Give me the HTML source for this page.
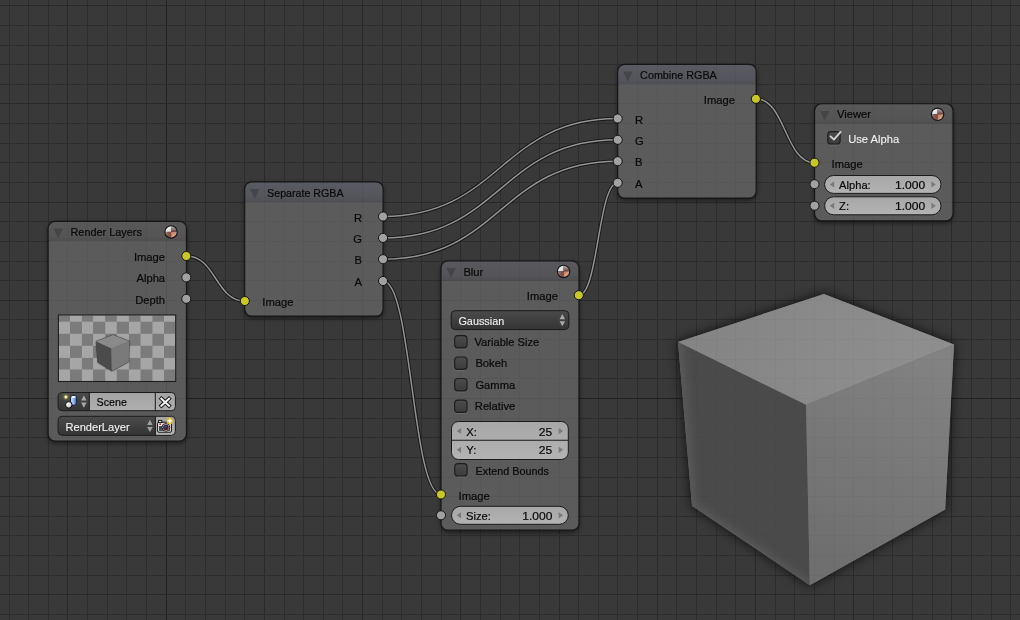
<!DOCTYPE html><html><head><meta charset="utf-8"><style>html,body{margin:0;padding:0;background:#393939;width:1020px;height:620px;overflow:hidden}svg{display:block;will-change:transform}text{font-family:"Liberation Sans", sans-serif}</style></head><body>
<svg width="1020" height="620" viewBox="0 0 1020 620">
<defs><filter id="shadow" x="-20%" y="-20%" width="140%" height="140%"><feGaussianBlur stdDeviation="2.2"/></filter><filter id="cshadow" x="-30%" y="-30%" width="160%" height="160%"><feGaussianBlur stdDeviation="6"/></filter><filter id="mshadow" x="-30%" y="-30%" width="160%" height="160%"><feGaussianBlur stdDeviation="1.2"/></filter><linearGradient id="numg" x1="0" y1="0" x2="0" y2="1"><stop offset="0" stop-color="#a7a7a7"/><stop offset="1" stop-color="#b3b3b3"/></linearGradient><linearGradient id="ddg" x1="0" y1="0" x2="0" y2="1"><stop offset="0" stop-color="#4b4b4b"/><stop offset="1" stop-color="#343434"/></linearGradient><linearGradient id="txtg" x1="0" y1="0" x2="0" y2="1"><stop offset="0" stop-color="#a3a3a3"/><stop offset="1" stop-color="#afafaf"/></linearGradient><linearGradient id="sphTL" x1="0" y1="0" x2="1" y2="1"><stop offset="0.2" stop-color="#ffffff"/><stop offset="1" stop-color="#d0d0d0"/></linearGradient><linearGradient id="sphTR" x1="0" y1="0" x2="0" y2="1"><stop offset="0.2" stop-color="#b4b4b4"/><stop offset="1" stop-color="#6a3a36"/></linearGradient><linearGradient id="sphBL" x1="0" y1="0" x2="1" y2="0"><stop offset="0" stop-color="#b8a8a4"/><stop offset="0.5" stop-color="#8c5a52"/><stop offset="1" stop-color="#7a4840"/></linearGradient><linearGradient id="sphBR" x1="0" y1="0" x2="1" y2="1"><stop offset="0" stop-color="#b87868"/><stop offset="1" stop-color="#f0c0b0"/></linearGradient><linearGradient id="cbg" x1="0" y1="0" x2="0" y2="1"><stop offset="0" stop-color="#4c4c4c"/><stop offset="1" stop-color="#3b3b3b"/></linearGradient></defs>
<rect width="1020" height="620" fill="#393939"/>
<rect x="9" y="0" width="1" height="620" fill="#2d2d2d"/>
<rect x="28" y="0" width="1" height="620" fill="#2d2d2d"/>
<rect x="48" y="0" width="1" height="620" fill="#2d2d2d"/>
<rect x="67" y="0" width="1" height="620" fill="#292929"/>
<rect x="87" y="0" width="1" height="620" fill="#2d2d2d"/>
<rect x="107" y="0" width="1" height="620" fill="#2d2d2d"/>
<rect x="126" y="0" width="1" height="620" fill="#2d2d2d"/>
<rect x="146" y="0" width="1" height="620" fill="#2d2d2d"/>
<rect x="166" y="0" width="1" height="620" fill="#212121"/>
<rect x="185" y="0" width="1" height="620" fill="#2d2d2d"/>
<rect x="205" y="0" width="1" height="620" fill="#2d2d2d"/>
<rect x="225" y="0" width="1" height="620" fill="#2d2d2d"/>
<rect x="244" y="0" width="1" height="620" fill="#2d2d2d"/>
<rect x="264" y="0" width="1" height="620" fill="#292929"/>
<rect x="284" y="0" width="1" height="620" fill="#2d2d2d"/>
<rect x="303" y="0" width="1" height="620" fill="#2d2d2d"/>
<rect x="323" y="0" width="1" height="620" fill="#2d2d2d"/>
<rect x="342" y="0" width="1" height="620" fill="#2d2d2d"/>
<rect x="362" y="0" width="1" height="620" fill="#292929"/>
<rect x="382" y="0" width="1" height="620" fill="#2d2d2d"/>
<rect x="401" y="0" width="1" height="620" fill="#2d2d2d"/>
<rect x="421" y="0" width="1" height="620" fill="#2d2d2d"/>
<rect x="441" y="0" width="1" height="620" fill="#2d2d2d"/>
<rect x="460" y="0" width="1" height="620" fill="#292929"/>
<rect x="480" y="0" width="1" height="620" fill="#2d2d2d"/>
<rect x="500" y="0" width="1" height="620" fill="#2d2d2d"/>
<rect x="519" y="0" width="1" height="620" fill="#2d2d2d"/>
<rect x="539" y="0" width="1" height="620" fill="#2d2d2d"/>
<rect x="559" y="0" width="1" height="620" fill="#292929"/>
<rect x="578" y="0" width="1" height="620" fill="#2d2d2d"/>
<rect x="598" y="0" width="1" height="620" fill="#2d2d2d"/>
<rect x="617" y="0" width="1" height="620" fill="#2d2d2d"/>
<rect x="637" y="0" width="1" height="620" fill="#2d2d2d"/>
<rect x="657" y="0" width="1" height="620" fill="#292929"/>
<rect x="676" y="0" width="1" height="620" fill="#2d2d2d"/>
<rect x="696" y="0" width="1" height="620" fill="#2d2d2d"/>
<rect x="716" y="0" width="1" height="620" fill="#2d2d2d"/>
<rect x="735" y="0" width="1" height="620" fill="#2d2d2d"/>
<rect x="755" y="0" width="1" height="620" fill="#292929"/>
<rect x="775" y="0" width="1" height="620" fill="#2d2d2d"/>
<rect x="794" y="0" width="1" height="620" fill="#2d2d2d"/>
<rect x="814" y="0" width="1" height="620" fill="#2d2d2d"/>
<rect x="834" y="0" width="1" height="620" fill="#2d2d2d"/>
<rect x="853" y="0" width="1" height="620" fill="#292929"/>
<rect x="873" y="0" width="1" height="620" fill="#2d2d2d"/>
<rect x="892" y="0" width="1" height="620" fill="#2d2d2d"/>
<rect x="912" y="0" width="1" height="620" fill="#2d2d2d"/>
<rect x="932" y="0" width="1" height="620" fill="#2d2d2d"/>
<rect x="951" y="0" width="1" height="620" fill="#292929"/>
<rect x="971" y="0" width="1" height="620" fill="#2d2d2d"/>
<rect x="991" y="0" width="1" height="620" fill="#2d2d2d"/>
<rect x="1010" y="0" width="1" height="620" fill="#2d2d2d"/>
<rect x="0" y="5" width="1020" height="1" fill="#292929"/>
<rect x="0" y="25" width="1020" height="1" fill="#2d2d2d"/>
<rect x="0" y="45" width="1020" height="1" fill="#2d2d2d"/>
<rect x="0" y="64" width="1020" height="1" fill="#2d2d2d"/>
<rect x="0" y="84" width="1020" height="1" fill="#2d2d2d"/>
<rect x="0" y="103" width="1020" height="1" fill="#292929"/>
<rect x="0" y="123" width="1020" height="1" fill="#2d2d2d"/>
<rect x="0" y="143" width="1020" height="1" fill="#2d2d2d"/>
<rect x="0" y="162" width="1020" height="1" fill="#2d2d2d"/>
<rect x="0" y="182" width="1020" height="1" fill="#2d2d2d"/>
<rect x="0" y="202" width="1020" height="1" fill="#292929"/>
<rect x="0" y="221" width="1020" height="1" fill="#2d2d2d"/>
<rect x="0" y="241" width="1020" height="1" fill="#2d2d2d"/>
<rect x="0" y="261" width="1020" height="1" fill="#2d2d2d"/>
<rect x="0" y="280" width="1020" height="1" fill="#2d2d2d"/>
<rect x="0" y="300" width="1020" height="1" fill="#292929"/>
<rect x="0" y="319" width="1020" height="1" fill="#2d2d2d"/>
<rect x="0" y="339" width="1020" height="1" fill="#2d2d2d"/>
<rect x="0" y="359" width="1020" height="1" fill="#2d2d2d"/>
<rect x="0" y="378" width="1020" height="1" fill="#2d2d2d"/>
<rect x="0" y="398" width="1020" height="1" fill="#212121"/>
<rect x="0" y="418" width="1020" height="1" fill="#2d2d2d"/>
<rect x="0" y="437" width="1020" height="1" fill="#2d2d2d"/>
<rect x="0" y="457" width="1020" height="1" fill="#2d2d2d"/>
<rect x="0" y="477" width="1020" height="1" fill="#2d2d2d"/>
<rect x="0" y="496" width="1020" height="1" fill="#292929"/>
<rect x="0" y="516" width="1020" height="1" fill="#2d2d2d"/>
<rect x="0" y="535" width="1020" height="1" fill="#2d2d2d"/>
<rect x="0" y="555" width="1020" height="1" fill="#2d2d2d"/>
<rect x="0" y="575" width="1020" height="1" fill="#2d2d2d"/>
<rect x="0" y="594" width="1020" height="1" fill="#292929"/>
<rect x="0" y="614" width="1020" height="1" fill="#2d2d2d"/>
<path d="M186.5,256.0 C215.7,256.0 215.7,301.0 244.8,301.0" fill="none" stroke="#181818" stroke-width="3.4"/><path d="M186.5,256.0 C215.7,256.0 215.7,301.0 244.8,301.0" fill="none" stroke="#939393" stroke-width="1.5"/>
<path d="M383.0,216.5 C500.4,216.5 500.4,118.5 617.7,118.5" fill="none" stroke="#181818" stroke-width="3.4"/><path d="M383.0,216.5 C500.4,216.5 500.4,118.5 617.7,118.5" fill="none" stroke="#939393" stroke-width="1.5"/>
<path d="M383.0,237.9 C500.4,237.9 500.4,139.8 617.7,139.8" fill="none" stroke="#181818" stroke-width="3.4"/><path d="M383.0,237.9 C500.4,237.9 500.4,139.8 617.7,139.8" fill="none" stroke="#939393" stroke-width="1.5"/>
<path d="M383.0,259.2 C500.4,259.2 500.4,161.2 617.7,161.2" fill="none" stroke="#181818" stroke-width="3.4"/><path d="M383.0,259.2 C500.4,259.2 500.4,161.2 617.7,161.2" fill="none" stroke="#939393" stroke-width="1.5"/>
<path d="M383.0,281.0 C412.0,281.0 412.0,494.5 441.0,494.5" fill="none" stroke="#181818" stroke-width="3.4"/><path d="M383.0,281.0 C412.0,281.0 412.0,494.5 441.0,494.5" fill="none" stroke="#939393" stroke-width="1.5"/>
<path d="M578.8,295.2 C598.2,295.2 598.2,182.8 617.7,182.8" fill="none" stroke="#181818" stroke-width="3.4"/><path d="M578.8,295.2 C598.2,295.2 598.2,182.8 617.7,182.8" fill="none" stroke="#939393" stroke-width="1.5"/>
<path d="M755.9,98.8 C785.2,98.8 785.2,162.7 814.5,162.7" fill="none" stroke="#181818" stroke-width="3.4"/><path d="M755.9,98.8 C785.2,98.8 785.2,162.7 814.5,162.7" fill="none" stroke="#939393" stroke-width="1.5"/>
<mask id="mrl" maskUnits="userSpaceOnUse" x="0" y="0" width="1020" height="620"><rect width="1020" height="620" fill="#fff"/><rect x="48.1" y="221.3" width="138.4" height="219.7" rx="7.0" fill="#000"/></mask>
<g mask="url(#mrl)"><rect x="47.6" y="222.8" width="139.4" height="220.7" rx="8.0" fill="#000" opacity="0.5" filter="url(#shadow)"/></g>
<g opacity="1">
<path d="M48.1,240.9 H186.5 V434.0 A7.0,7.0 0 0 1 179.5,441.0 H55.1 A7.0,7.0 0 0 1 48.1,434.0 Z" fill="#6a6a6a" fill-opacity="0.7"/>
<linearGradient id="hgrl" x1="0" y1="0" x2="0" y2="1"><stop offset="0" stop-color="#656565"/><stop offset="0.75" stop-color="#616161"/><stop offset="1" stop-color="#585858"/></linearGradient>
<path d="M48.1,240.9 V228.3 A7.0,7.0 0 0 1 55.1,221.3 H179.5 A7.0,7.0 0 0 1 186.5,228.3 V240.9 Z" fill="url(#hgrl)" fill-opacity="0.7"/>
</g>
<rect x="48.1" y="221.3" width="138.4" height="219.7" rx="7.0" fill="none" stroke="#161616" stroke-width="1.15"/>
<path d="M53.50,228.50 H62.90 L58.20,238.30 Z" fill="#454545"/>
<text x="70.50" y="236.00" font-size="11.4" fill="#0a0a0a" stroke="#0a0a0a" stroke-width="0.22" text-anchor="start" textLength="71.40" lengthAdjust="spacingAndGlyphs">Render Layers</text>
<circle cx="171.10" cy="231.90" r="6.75" fill="#161616"/><g clip-path="url(#sph171)"><clipPath id="sph171"><circle cx="171.10" cy="231.90" r="5.6"/></clipPath><rect x="164.35" y="225.15" width="6.75" height="6.75" fill="url(#sphTL)"/><rect x="171.1" y="225.15" width="6.75" height="6.75" fill="url(#sphTR)"/><rect x="164.35" y="231.9" width="6.75" height="6.75" fill="url(#sphBL)"/><rect x="171.1" y="231.9" width="6.75" height="6.75" fill="url(#sphBR)"/><circle cx="173.90" cy="234.50" r="1.1" fill="#e8a040" opacity="0.85"/></g>
<text x="165.10" y="260.90" font-size="11.4" fill="#0a0a0a" stroke="#0a0a0a" stroke-width="0.22" text-anchor="end" textLength="31.20" lengthAdjust="spacingAndGlyphs">Image</text>
<text x="165.10" y="282.30" font-size="11.4" fill="#0a0a0a" stroke="#0a0a0a" stroke-width="0.22" text-anchor="end" textLength="28.64" lengthAdjust="spacingAndGlyphs">Alpha</text>
<text x="165.10" y="303.70" font-size="11.4" fill="#0a0a0a" stroke="#0a0a0a" stroke-width="0.22" text-anchor="end" textLength="29.88" lengthAdjust="spacingAndGlyphs">Depth</text>
<circle cx="186.30" cy="256.00" r="4.55" fill="#c7c729" stroke="#141414" stroke-width="1"/>
<circle cx="186.30" cy="277.40" r="4.55" fill="#a1a1a1" stroke="#141414" stroke-width="1"/>
<circle cx="186.30" cy="298.80" r="4.55" fill="#a1a1a1" stroke="#141414" stroke-width="1"/>
<rect x="58.4" y="315.0" width="117.3" height="66.5" fill="#a6a6a6"/>
<rect x="58.90" y="315.50" width="11.10" height="6.20" fill="#7b7b7b"/>
<rect x="81.90" y="315.50" width="11.20" height="6.20" fill="#7b7b7b"/>
<rect x="105.20" y="315.50" width="11.60" height="6.20" fill="#7b7b7b"/>
<rect x="128.90" y="315.50" width="11.60" height="6.20" fill="#7b7b7b"/>
<rect x="152.40" y="315.50" width="11.60" height="6.20" fill="#7b7b7b"/>
<rect x="70.00" y="321.70" width="11.90" height="12.10" fill="#7b7b7b"/>
<rect x="93.10" y="321.70" width="12.10" height="12.10" fill="#7b7b7b"/>
<rect x="116.80" y="321.70" width="12.10" height="12.10" fill="#7b7b7b"/>
<rect x="140.50" y="321.70" width="11.90" height="12.10" fill="#7b7b7b"/>
<rect x="164.00" y="321.70" width="11.20" height="12.10" fill="#7b7b7b"/>
<rect x="58.90" y="333.80" width="11.10" height="12.00" fill="#7b7b7b"/>
<rect x="81.90" y="333.80" width="11.20" height="12.00" fill="#7b7b7b"/>
<rect x="105.20" y="333.80" width="11.60" height="12.00" fill="#7b7b7b"/>
<rect x="128.90" y="333.80" width="11.60" height="12.00" fill="#7b7b7b"/>
<rect x="152.40" y="333.80" width="11.60" height="12.00" fill="#7b7b7b"/>
<rect x="70.00" y="345.80" width="11.90" height="12.10" fill="#7b7b7b"/>
<rect x="93.10" y="345.80" width="12.10" height="12.10" fill="#7b7b7b"/>
<rect x="116.80" y="345.80" width="12.10" height="12.10" fill="#7b7b7b"/>
<rect x="140.50" y="345.80" width="11.90" height="12.10" fill="#7b7b7b"/>
<rect x="164.00" y="345.80" width="11.20" height="12.10" fill="#7b7b7b"/>
<rect x="58.90" y="357.90" width="11.10" height="11.60" fill="#7b7b7b"/>
<rect x="81.90" y="357.90" width="11.20" height="11.60" fill="#7b7b7b"/>
<rect x="105.20" y="357.90" width="11.60" height="11.60" fill="#7b7b7b"/>
<rect x="128.90" y="357.90" width="11.60" height="11.60" fill="#7b7b7b"/>
<rect x="152.40" y="357.90" width="11.60" height="11.60" fill="#7b7b7b"/>
<rect x="70.00" y="369.50" width="11.90" height="11.70" fill="#7b7b7b"/>
<rect x="93.10" y="369.50" width="12.10" height="11.70" fill="#7b7b7b"/>
<rect x="116.80" y="369.50" width="12.10" height="11.70" fill="#7b7b7b"/>
<rect x="140.50" y="369.50" width="11.90" height="11.70" fill="#7b7b7b"/>
<rect x="164.00" y="369.50" width="11.20" height="11.70" fill="#7b7b7b"/>
<rect x="58.4" y="315.0" width="117.3" height="66.5" fill="none" stroke="#1e1e1e" stroke-width="1.1"/>
<polygon points="113.10,335.10 129.30,341.20 128.70,361.80 111.90,371.00 97.90,362.40 96.10,341.50" fill="#000" opacity="0.35" filter="url(#mshadow)"/>
<polygon points="113.10,335.10 129.30,341.20 128.70,361.80 111.90,371.00 97.90,362.40 96.10,341.50" fill="#6a6a6a" stroke="#3a3a3a" stroke-width="0.8" stroke-linejoin="round"/>
<polygon points="113.10,335.10 129.30,341.20 111.30,348.50 96.10,341.50" fill="#8a8a8a"/>
<polygon points="96.10,341.50 111.30,348.50 111.90,371.00 97.90,362.40" fill="#4b4b4b"/>
<polygon points="111.30,348.50 129.30,341.20 128.70,361.80 111.90,371.00" fill="#7a7a7a"/>
<rect x="58.1" y="392.5" width="117.3" height="18.2" rx="4" fill="url(#txtg)"/>
<path d="M89.3,392.5 H62.1 A4,4 0 0 0 58.1,396.5 V406.7 A4,4 0 0 0 62.1,410.7 H89.3 Z" fill="url(#ddg)"/>
<line x1="89.3" y1="392.5" x2="89.3" y2="410.7" stroke="#1a1a1a" stroke-width="1"/>
<line x1="155.3" y1="392.5" x2="155.3" y2="410.7" stroke="#1a1a1a" stroke-width="1"/>
<rect x="58.1" y="392.5" width="117.3" height="18.2" rx="4" fill="none" stroke="#1a1a1a" stroke-width="1"/>
<text x="96.60" y="405.60" font-size="11.4" fill="#0a0a0a" stroke="#0a0a0a" stroke-width="0.22" text-anchor="start" textLength="30.30" lengthAdjust="spacingAndGlyphs">Scene</text>
<circle cx="65.9" cy="397.0" r="2.4" fill="#c8c040" opacity="0.6" filter="url(#mshadow)"/>
<circle cx="65.9" cy="397.0" r="1.7" fill="#d8d060"/><circle cx="65.9" cy="397.0" r="0.9" fill="#ffffff"/>
<linearGradient id="cylg" x1="0" y1="0" x2="1" y2="0"><stop offset="0" stop-color="#e8f0ff"/><stop offset="0.45" stop-color="#9ab8f0"/><stop offset="1" stop-color="#3f6cc0"/></linearGradient>
<rect x="70.6" y="395.4" width="6.0" height="9.9" rx="2.6" fill="url(#cylg)" stroke="#102050" stroke-width="1"/>
<ellipse cx="73.6" cy="397.0" rx="2.2" ry="1.1" fill="#f4f8ff"/>
<radialGradient id="sphw" cx="0.35" cy="0.35" r="0.7"><stop offset="0" stop-color="#ffffff"/><stop offset="0.6" stop-color="#d8d8d8"/><stop offset="1" stop-color="#8a8a8a"/></radialGradient>
<circle cx="68.8" cy="404.9" r="3.3" fill="url(#sphw)" stroke="#0a0a0a" stroke-width="1"/>
<path d="M81.10,400.50 L83.85,395.40 L86.60,400.50 Z" fill="#a6a6a6"/><path d="M81.10,402.60 L83.85,407.65 L86.60,402.60 Z" fill="#a6a6a6"/>
<path d="M160.0,397.4 L170.4,407.0 M170.4,397.4 L160.0,407.0" stroke="#141414" stroke-width="4.0"/>
<path d="M160.6,398.0 L169.8,406.4 M169.8,398.0 L160.6,406.4" stroke="#f4f4f4" stroke-width="2.0"/>
<rect x="58.1" y="416.3" width="117.3" height="19.1" rx="4" fill="url(#txtg)"/>
<path d="M155.4,416.3 H62.1 A4,4 0 0 0 58.1,420.3 V431.40000000000003 A4,4 0 0 0 62.1,435.40000000000003 H155.4 Z" fill="url(#ddg)"/>
<line x1="155.4" y1="416.3" x2="155.4" y2="435.40000000000003" stroke="#1a1a1a" stroke-width="1"/>
<rect x="58.1" y="416.3" width="117.3" height="19.1" rx="4" fill="none" stroke="#1a1a1a" stroke-width="1"/>
<text x="65.50" y="430.80" font-size="11.4" fill="#f2f2f2" stroke="#f2f2f2" stroke-width="0.12" text-anchor="start" textLength="64.10" lengthAdjust="spacingAndGlyphs">RenderLayer</text>
<path d="M147.15,424.95 L149.90,419.85 L152.65,424.95 Z" fill="#a0a0a0"/><path d="M147.15,427.05 L149.90,432.10 L152.65,427.05 Z" fill="#a0a0a0"/>
<rect x="157.6" y="422.2" width="13.8" height="10.0" rx="1.2" fill="#e6e6e6" stroke="#0e0e0e" stroke-width="1"/>
<rect x="159.0" y="426.0" width="11.0" height="4.9" fill="#4a4a4a"/>
<rect x="158.6" y="420.4" width="3.2" height="2.2" fill="#e6e6e6" stroke="#0e0e0e" stroke-width="0.9"/>
<circle cx="160.2" cy="424.2" r="0.9" fill="#e02020"/>
<circle cx="165.9" cy="427.4" r="3.9" fill="#e6e6e6" stroke="#0e0e0e" stroke-width="0.9"/>
<radialGradient id="lensg" cx="0.4" cy="0.4" r="0.7"><stop offset="0" stop-color="#3a4a8a"/><stop offset="0.6" stop-color="#402030"/><stop offset="1" stop-color="#a03020"/></radialGradient>
<circle cx="165.9" cy="427.4" r="2.9" fill="url(#lensg)"/>
<circle cx="169.8" cy="420.9" r="3.3" fill="#d4b430"/>
<path d="M169.8,418.5 V423.3 M167.4,420.9 H172.2" stroke="#ffffff" stroke-width="1.3"/>
<mask id="msep" maskUnits="userSpaceOnUse" x="0" y="0" width="1020" height="620"><rect width="1020" height="620" fill="#fff"/><rect x="244.7" y="181.9" width="138.4" height="134.2" rx="7.0" fill="#000"/></mask>
<g mask="url(#msep)"><rect x="244.2" y="183.4" width="139.4" height="135.2" rx="8.0" fill="#000" opacity="0.5" filter="url(#shadow)"/></g>
<g opacity="1">
<path d="M244.7,201.5 H383.1 V309.1 A7.0,7.0 0 0 1 376.1,316.1 H251.7 A7.0,7.0 0 0 1 244.7,309.1 Z" fill="#6a6a6a" fill-opacity="0.7"/>
<linearGradient id="hgsep" x1="0" y1="0" x2="0" y2="1"><stop offset="0" stop-color="#676a74"/><stop offset="0.75" stop-color="#60626b"/><stop offset="1" stop-color="#575a62"/></linearGradient>
<path d="M244.7,201.5 V188.9 A7.0,7.0 0 0 1 251.7,181.9 H376.1 A7.0,7.0 0 0 1 383.1,188.9 V201.5 Z" fill="url(#hgsep)" fill-opacity="0.7"/>
</g>
<rect x="244.7" y="181.9" width="138.4" height="134.2" rx="7.0" fill="none" stroke="#161616" stroke-width="1.15"/>
<path d="M250.10,189.10 H259.50 L254.80,198.90 Z" fill="#44464c"/>
<text x="267.10" y="196.60" font-size="11.4" fill="#0a0a0a" stroke="#0a0a0a" stroke-width="0.22" text-anchor="start" textLength="76.50" lengthAdjust="spacingAndGlyphs">Separate RGBA</text>
<text x="362.00" y="221.50" font-size="11.4" fill="#0a0a0a" stroke="#0a0a0a" stroke-width="0.22" text-anchor="end" textLength="8.09" lengthAdjust="spacingAndGlyphs">R</text>
<circle cx="383.00" cy="216.50" r="4.55" fill="#a1a1a1" stroke="#141414" stroke-width="1"/>
<text x="362.00" y="242.90" font-size="11.4" fill="#0a0a0a" stroke="#0a0a0a" stroke-width="0.22" text-anchor="end" textLength="8.71" lengthAdjust="spacingAndGlyphs">G</text>
<circle cx="383.00" cy="237.90" r="4.55" fill="#a1a1a1" stroke="#141414" stroke-width="1"/>
<text x="362.00" y="264.20" font-size="11.4" fill="#0a0a0a" stroke="#0a0a0a" stroke-width="0.22" text-anchor="end" textLength="7.47" lengthAdjust="spacingAndGlyphs">B</text>
<circle cx="383.00" cy="259.20" r="4.55" fill="#a1a1a1" stroke="#141414" stroke-width="1"/>
<text x="362.00" y="286.00" font-size="11.4" fill="#0a0a0a" stroke="#0a0a0a" stroke-width="0.22" text-anchor="end" textLength="7.47" lengthAdjust="spacingAndGlyphs">A</text>
<circle cx="383.00" cy="281.00" r="4.55" fill="#a1a1a1" stroke="#141414" stroke-width="1"/>
<text x="262.30" y="306.10" font-size="11.4" fill="#0a0a0a" stroke="#0a0a0a" stroke-width="0.22" text-anchor="start" textLength="31.13" lengthAdjust="spacingAndGlyphs">Image</text>
<circle cx="244.80" cy="301.00" r="4.55" fill="#c7c729" stroke="#141414" stroke-width="1"/>
<mask id="mcomb" maskUnits="userSpaceOnUse" x="0" y="0" width="1020" height="620"><rect width="1020" height="620" fill="#fff"/><rect x="617.7" y="64.4" width="138.5" height="133.7" rx="7.0" fill="#000"/></mask>
<g mask="url(#mcomb)"><rect x="617.2" y="65.9" width="139.5" height="134.7" rx="8.0" fill="#000" opacity="0.5" filter="url(#shadow)"/></g>
<g opacity="1">
<path d="M617.7,84.0 H756.2 V191.1 A7.0,7.0 0 0 1 749.2,198.1 H624.7 A7.0,7.0 0 0 1 617.7,191.1 Z" fill="#6a6a6a" fill-opacity="0.7"/>
<linearGradient id="hgcomb" x1="0" y1="0" x2="0" y2="1"><stop offset="0" stop-color="#676a74"/><stop offset="0.75" stop-color="#60626b"/><stop offset="1" stop-color="#575a62"/></linearGradient>
<path d="M617.7,84.0 V71.4 A7.0,7.0 0 0 1 624.7,64.4 H749.2 A7.0,7.0 0 0 1 756.2,71.4 V84.0 Z" fill="url(#hgcomb)" fill-opacity="0.7"/>
</g>
<rect x="617.7" y="64.4" width="138.5" height="133.7" rx="7.0" fill="none" stroke="#161616" stroke-width="1.15"/>
<path d="M623.10,71.60 H632.50 L627.80,81.40 Z" fill="#44464c"/>
<text x="640.10" y="79.10" font-size="11.4" fill="#0a0a0a" stroke="#0a0a0a" stroke-width="0.22" text-anchor="start" textLength="76.70" lengthAdjust="spacingAndGlyphs">Combine RGBA</text>
<text x="735.00" y="103.90" font-size="11.4" fill="#0a0a0a" stroke="#0a0a0a" stroke-width="0.22" text-anchor="end" textLength="31.13" lengthAdjust="spacingAndGlyphs">Image</text>
<circle cx="755.90" cy="98.80" r="4.55" fill="#c7c729" stroke="#141414" stroke-width="1"/>
<text x="635.00" y="123.50" font-size="11.4" fill="#0a0a0a" stroke="#0a0a0a" stroke-width="0.22" text-anchor="start" textLength="8.09" lengthAdjust="spacingAndGlyphs">R</text>
<circle cx="617.70" cy="118.50" r="4.55" fill="#a1a1a1" stroke="#141414" stroke-width="1"/>
<text x="635.00" y="144.80" font-size="11.4" fill="#0a0a0a" stroke="#0a0a0a" stroke-width="0.22" text-anchor="start" textLength="8.71" lengthAdjust="spacingAndGlyphs">G</text>
<circle cx="617.70" cy="139.80" r="4.55" fill="#a1a1a1" stroke="#141414" stroke-width="1"/>
<text x="635.00" y="166.20" font-size="11.4" fill="#0a0a0a" stroke="#0a0a0a" stroke-width="0.22" text-anchor="start" textLength="7.47" lengthAdjust="spacingAndGlyphs">B</text>
<circle cx="617.70" cy="161.20" r="4.55" fill="#a1a1a1" stroke="#141414" stroke-width="1"/>
<text x="635.00" y="187.80" font-size="11.4" fill="#0a0a0a" stroke="#0a0a0a" stroke-width="0.22" text-anchor="start" textLength="7.47" lengthAdjust="spacingAndGlyphs">A</text>
<circle cx="617.70" cy="182.80" r="4.55" fill="#a1a1a1" stroke="#141414" stroke-width="1"/>
<mask id="mview" maskUnits="userSpaceOnUse" x="0" y="0" width="1020" height="620"><rect width="1020" height="620" fill="#fff"/><rect x="814.6" y="103.7" width="138.4" height="117.1" rx="7.0" fill="#000"/></mask>
<g mask="url(#mview)"><rect x="814.1" y="105.2" width="139.4" height="118.1" rx="8.0" fill="#000" opacity="0.5" filter="url(#shadow)"/></g>
<g opacity="1">
<path d="M814.6,123.30000000000001 H953.0 V213.8 A7.0,7.0 0 0 1 946.0,220.8 H821.6 A7.0,7.0 0 0 1 814.6,213.8 Z" fill="#6a6a6a" fill-opacity="0.7"/>
<linearGradient id="hgview" x1="0" y1="0" x2="0" y2="1"><stop offset="0" stop-color="#656565"/><stop offset="0.75" stop-color="#616161"/><stop offset="1" stop-color="#585858"/></linearGradient>
<path d="M814.6,123.30000000000001 V110.7 A7.0,7.0 0 0 1 821.6,103.7 H946.0 A7.0,7.0 0 0 1 953.0,110.7 V123.30000000000001 Z" fill="url(#hgview)" fill-opacity="0.7"/>
</g>
<rect x="814.6" y="103.7" width="138.4" height="117.1" rx="7.0" fill="none" stroke="#161616" stroke-width="1.15"/>
<path d="M820.00,110.90 H829.40 L824.70,120.70 Z" fill="#454545"/>
<text x="837.00" y="118.40" font-size="11.4" fill="#0a0a0a" stroke="#0a0a0a" stroke-width="0.22" text-anchor="start" textLength="34.03" lengthAdjust="spacingAndGlyphs">Viewer</text>
<circle cx="937.60" cy="114.30" r="6.75" fill="#161616"/><g clip-path="url(#sph937)"><clipPath id="sph937"><circle cx="937.60" cy="114.30" r="5.6"/></clipPath><rect x="930.85" y="107.55" width="6.75" height="6.75" fill="url(#sphTL)"/><rect x="937.6" y="107.55" width="6.75" height="6.75" fill="url(#sphTR)"/><rect x="930.85" y="114.3" width="6.75" height="6.75" fill="url(#sphBL)"/><rect x="937.6" y="114.3" width="6.75" height="6.75" fill="url(#sphBR)"/><circle cx="940.40" cy="116.90" r="1.1" fill="#e8a040" opacity="0.85"/></g>
<path d="M829.70,145.10 H838.20" stroke="#7a7a7a" stroke-width="1" opacity="0.6"/><rect x="827.78" y="131.67" width="12.35" height="12.35" rx="3.3" fill="url(#cbg)" stroke="#1c1c1c" stroke-width="1.15"/><path d="M830.50,136.40 L834.00,139.50 L840.60,131.90" fill="none" stroke="#d2d2d2" stroke-width="1.9" stroke-linecap="round" stroke-linejoin="round"/>
<text x="848.20" y="143.00" font-size="11.4" fill="#f0f0f0" stroke="#f0f0f0" stroke-width="0.12" text-anchor="start" textLength="51.05" lengthAdjust="spacingAndGlyphs">Use Alpha</text>
<text x="831.60" y="167.70" font-size="11.4" fill="#0a0a0a" stroke="#0a0a0a" stroke-width="0.22" text-anchor="start" textLength="31.13" lengthAdjust="spacingAndGlyphs">Image</text>
<circle cx="814.50" cy="162.70" r="4.55" fill="#c7c729" stroke="#141414" stroke-width="1"/>
<rect x="824.60" y="175.50" width="116.40" height="17.90" rx="8.95" fill="url(#numg)" stroke="#1a1a1a" stroke-width="1"/><path d="M834.20,181.35 L829.80,184.45 L834.20,187.55 Z" fill="#7a7a7a"/><path d="M931.40,181.35 L935.80,184.45 L931.40,187.55 Z" fill="#7a7a7a"/><text x="839.10" y="189.05" font-size="11.4" fill="#0a0a0a" stroke="#0a0a0a" stroke-width="0.22" text-anchor="start" textLength="31.60" lengthAdjust="spacingAndGlyphs">Alpha:</text><text x="925.20" y="189.05" font-size="11.4" fill="#0a0a0a" stroke="#0a0a0a" stroke-width="0.22" text-anchor="end" textLength="30.20" lengthAdjust="spacingAndGlyphs">1.000</text>
<rect x="824.60" y="196.80" width="116.40" height="18.00" rx="9.00" fill="url(#numg)" stroke="#1a1a1a" stroke-width="1"/><path d="M834.20,202.70 L829.80,205.80 L834.20,208.90 Z" fill="#7a7a7a"/><path d="M931.40,202.70 L935.80,205.80 L931.40,208.90 Z" fill="#7a7a7a"/><text x="839.10" y="210.40" font-size="11.4" fill="#0a0a0a" stroke="#0a0a0a" stroke-width="0.22" text-anchor="start" textLength="9.95" lengthAdjust="spacingAndGlyphs">Z:</text><text x="925.20" y="210.40" font-size="11.4" fill="#0a0a0a" stroke="#0a0a0a" stroke-width="0.22" text-anchor="end" textLength="30.20" lengthAdjust="spacingAndGlyphs">1.000</text>
<circle cx="814.50" cy="184.20" r="4.55" fill="#a1a1a1" stroke="#141414" stroke-width="1"/>
<circle cx="814.50" cy="205.70" r="4.55" fill="#a1a1a1" stroke="#141414" stroke-width="1"/>
<mask id="mblur" maskUnits="userSpaceOnUse" x="0" y="0" width="1020" height="620"><rect width="1020" height="620" fill="#fff"/><rect x="441.0" y="260.8" width="138.0" height="269.4" rx="7.0" fill="#000"/></mask>
<g mask="url(#mblur)"><rect x="440.5" y="262.3" width="139.0" height="270.4" rx="8.0" fill="#000" opacity="0.5" filter="url(#shadow)"/></g>
<g opacity="1">
<path d="M441.0,280.40000000000003 H579.0 V523.2 A7.0,7.0 0 0 1 572.0,530.2 H448.0 A7.0,7.0 0 0 1 441.0,523.2 Z" fill="#6a6a6a" fill-opacity="0.7"/>
<linearGradient id="hgblur" x1="0" y1="0" x2="0" y2="1"><stop offset="0" stop-color="#67656b"/><stop offset="0.75" stop-color="#616065"/><stop offset="1" stop-color="#58575d"/></linearGradient>
<path d="M441.0,280.40000000000003 V267.8 A7.0,7.0 0 0 1 448.0,260.8 H572.0 A7.0,7.0 0 0 1 579.0,267.8 V280.40000000000003 Z" fill="url(#hgblur)" fill-opacity="0.7"/>
</g>
<rect x="441.0" y="260.8" width="138.0" height="269.4" rx="7.0" fill="none" stroke="#161616" stroke-width="1.15"/>
<path d="M446.40,268.00 H455.80 L451.10,277.80 Z" fill="#464449"/>
<text x="463.40" y="275.50" font-size="11.4" fill="#0a0a0a" stroke="#0a0a0a" stroke-width="0.22" text-anchor="start" textLength="19.92" lengthAdjust="spacingAndGlyphs">Blur</text>
<circle cx="563.60" cy="271.40" r="6.75" fill="#161616"/><g clip-path="url(#sph563)"><clipPath id="sph563"><circle cx="563.60" cy="271.40" r="5.6"/></clipPath><rect x="556.85" y="264.65000000000003" width="6.75" height="6.75" fill="url(#sphTL)"/><rect x="563.6" y="264.65000000000003" width="6.75" height="6.75" fill="url(#sphTR)"/><rect x="556.85" y="271.40000000000003" width="6.75" height="6.75" fill="url(#sphBL)"/><rect x="563.6" y="271.40000000000003" width="6.75" height="6.75" fill="url(#sphBR)"/><circle cx="566.40" cy="274.00" r="1.1" fill="#e8a040" opacity="0.85"/></g>
<text x="558.00" y="299.90" font-size="11.4" fill="#0a0a0a" stroke="#0a0a0a" stroke-width="0.22" text-anchor="end" textLength="31.13" lengthAdjust="spacingAndGlyphs">Image</text>
<circle cx="578.80" cy="295.20" r="4.55" fill="#c7c729" stroke="#141414" stroke-width="1"/>
<rect x="451.2" y="310.7" width="117.6" height="18.9" rx="4" fill="url(#ddg)" stroke="#1a1a1a" stroke-width="1"/>
<text x="458.40" y="324.80" font-size="11.4" fill="#f0f0f0" stroke="#f0f0f0" stroke-width="0.12" text-anchor="start" textLength="45.90" lengthAdjust="spacingAndGlyphs">Gaussian</text>
<path d="M559.55,319.15 L562.30,314.05 L565.05,319.15 Z" fill="#a8a8a8"/><path d="M559.55,321.25 L562.30,326.30 L565.05,321.25 Z" fill="#a8a8a8"/>
<path d="M456.60,349.00 H465.10" stroke="#7a7a7a" stroke-width="1" opacity="0.6"/><rect x="454.68" y="335.57" width="12.35" height="12.35" rx="3.3" fill="url(#cbg)" stroke="#1c1c1c" stroke-width="1.15"/>
<text x="474.50" y="345.90" font-size="11.4" fill="#0a0a0a" stroke="#0a0a0a" stroke-width="0.22" text-anchor="start" textLength="64.70" lengthAdjust="spacingAndGlyphs">Variable Size</text>
<path d="M456.60,370.40 H465.10" stroke="#7a7a7a" stroke-width="1" opacity="0.6"/><rect x="454.68" y="356.97" width="12.35" height="12.35" rx="3.3" fill="url(#cbg)" stroke="#1c1c1c" stroke-width="1.15"/>
<text x="475.40" y="367.30" font-size="11.4" fill="#0a0a0a" stroke="#0a0a0a" stroke-width="0.22" text-anchor="start" textLength="31.76" lengthAdjust="spacingAndGlyphs">Bokeh</text>
<path d="M456.60,391.90 H465.10" stroke="#7a7a7a" stroke-width="1" opacity="0.6"/><rect x="454.68" y="378.47" width="12.35" height="12.35" rx="3.3" fill="url(#cbg)" stroke="#1c1c1c" stroke-width="1.15"/>
<text x="475.40" y="388.80" font-size="11.4" fill="#0a0a0a" stroke="#0a0a0a" stroke-width="0.22" text-anchor="start" textLength="39.83" lengthAdjust="spacingAndGlyphs">Gamma</text>
<path d="M456.60,413.50 H465.10" stroke="#7a7a7a" stroke-width="1" opacity="0.6"/><rect x="454.68" y="400.07" width="12.35" height="12.35" rx="3.3" fill="url(#cbg)" stroke="#1c1c1c" stroke-width="1.15"/>
<text x="474.80" y="410.40" font-size="11.4" fill="#0a0a0a" stroke="#0a0a0a" stroke-width="0.22" text-anchor="start" textLength="40.46" lengthAdjust="spacingAndGlyphs">Relative</text>
<rect x="451.5" y="421.5" width="116.8" height="38.0" rx="7" fill="url(#numg)" stroke="#1a1a1a" stroke-width="1"/>
<line x1="451.5" y1="440.3" x2="568.3" y2="440.3" stroke="#1a1a1a" stroke-width="1.1"/>
<path d="M461.10,427.90 L456.70,431.00 L461.10,434.10 Z" fill="#7a7a7a"/>
<path d="M558.70,427.90 L563.10,431.00 L558.70,434.10 Z" fill="#7a7a7a"/>
<text x="466.30" y="435.60" font-size="11.4" fill="#0a0a0a" stroke="#0a0a0a" stroke-width="0.22" text-anchor="start" textLength="10.58" lengthAdjust="spacingAndGlyphs">X:</text>
<text x="552.20" y="435.60" font-size="11.4" fill="#0a0a0a" stroke="#0a0a0a" stroke-width="0.22" text-anchor="end" textLength="13.35" lengthAdjust="spacingAndGlyphs">25</text>
<path d="M461.10,446.70 L456.70,449.80 L461.10,452.90 Z" fill="#7a7a7a"/>
<path d="M558.70,446.70 L563.10,449.80 L558.70,452.90 Z" fill="#7a7a7a"/>
<text x="466.30" y="454.40" font-size="11.4" fill="#0a0a0a" stroke="#0a0a0a" stroke-width="0.22" text-anchor="start" textLength="9.96" lengthAdjust="spacingAndGlyphs">Y:</text>
<text x="552.20" y="454.40" font-size="11.4" fill="#0a0a0a" stroke="#0a0a0a" stroke-width="0.22" text-anchor="end" textLength="13.35" lengthAdjust="spacingAndGlyphs">25</text>
<path d="M456.70,477.10 H465.20" stroke="#7a7a7a" stroke-width="1" opacity="0.6"/><rect x="454.77" y="463.68" width="12.35" height="12.35" rx="3.3" fill="url(#cbg)" stroke="#1c1c1c" stroke-width="1.15"/>
<text x="475.60" y="475.00" font-size="11.4" fill="#0a0a0a" stroke="#0a0a0a" stroke-width="0.22" text-anchor="start" textLength="73.30" lengthAdjust="spacingAndGlyphs">Extend Bounds</text>
<text x="458.60" y="500.30" font-size="11.4" fill="#0a0a0a" stroke="#0a0a0a" stroke-width="0.22" text-anchor="start" textLength="31.20" lengthAdjust="spacingAndGlyphs">Image</text>
<rect x="451.50" y="506.30" width="116.80" height="18.00" rx="9.00" fill="url(#numg)" stroke="#1a1a1a" stroke-width="1"/><path d="M461.10,512.20 L456.70,515.30 L461.10,518.40 Z" fill="#7a7a7a"/><path d="M558.70,512.20 L563.10,515.30 L558.70,518.40 Z" fill="#7a7a7a"/><text x="466.00" y="519.90" font-size="11.4" fill="#0a0a0a" stroke="#0a0a0a" stroke-width="0.22" text-anchor="start" textLength="24.90" lengthAdjust="spacingAndGlyphs">Size:</text><text x="552.50" y="519.90" font-size="11.4" fill="#0a0a0a" stroke="#0a0a0a" stroke-width="0.22" text-anchor="end" textLength="30.20" lengthAdjust="spacingAndGlyphs">1.000</text>
<circle cx="441.00" cy="494.50" r="4.55" fill="#c7c729" stroke="#141414" stroke-width="1"/>
<circle cx="441.00" cy="515.30" r="4.55" fill="#a1a1a1" stroke="#141414" stroke-width="1"/>
<polygon points="824.00,293.90 954.00,344.50 945.20,509.50 809.80,585.20 692.00,505.90 678.00,341.90" fill="#000" opacity="0.75" filter="url(#cshadow)"/>
<linearGradient id="ctop" gradientUnits="userSpaceOnUse" x1="700" y1="320" x2="900" y2="380"><stop offset="0" stop-color="#848484"/><stop offset="1" stop-color="#8e8e8e"/></linearGradient>
<linearGradient id="cright" gradientUnits="userSpaceOnUse" x1="940" y1="360" x2="830" y2="560"><stop offset="0" stop-color="#828282"/><stop offset="1" stop-color="#6f6f6f"/></linearGradient>
<clipPath id="clipL"><polygon points="678.00,341.90 806.00,404.80 809.80,585.20 692.00,505.90"/></clipPath>
<filter id="edgeblur" x="-20%" y="-20%" width="140%" height="140%"><feGaussianBlur stdDeviation="5"/></filter>
<polygon points="824.00,293.90 954.00,344.50 945.20,509.50 809.80,585.20 692.00,505.90 678.00,341.90" fill="#6a6a6a"/>
<polygon points="824.00,293.90 954.00,344.50 806.00,404.80 678.00,341.90" fill="url(#ctop)"/>
<polygon points="806.00,404.80 954.00,344.50 945.20,509.50 809.80,585.20" fill="url(#cright)"/>
<g clip-path="url(#clipL)"><polygon points="678.00,341.90 806.00,404.80 809.80,585.20 692.00,505.90" fill="#4a4a4a"/><polyline points="676.00,337.90 690.00,507.90 809.80,589.20" fill="none" stroke="#5c5c5c" stroke-width="12" filter="url(#edgeblur)"/></g>
<clipPath id="clipCube"><polygon points="824.00,293.90 954.00,344.50 945.20,509.50 809.80,585.20 692.00,505.90 678.00,341.90"/></clipPath>
<g clip-path="url(#clipCube)" opacity="0.035"><rect x="9" y="0" width="1" height="620" fill="#2d2d2d"/>
<rect x="28" y="0" width="1" height="620" fill="#2d2d2d"/>
<rect x="48" y="0" width="1" height="620" fill="#2d2d2d"/>
<rect x="67" y="0" width="1" height="620" fill="#292929"/>
<rect x="87" y="0" width="1" height="620" fill="#2d2d2d"/>
<rect x="107" y="0" width="1" height="620" fill="#2d2d2d"/>
<rect x="126" y="0" width="1" height="620" fill="#2d2d2d"/>
<rect x="146" y="0" width="1" height="620" fill="#2d2d2d"/>
<rect x="166" y="0" width="1" height="620" fill="#212121"/>
<rect x="185" y="0" width="1" height="620" fill="#2d2d2d"/>
<rect x="205" y="0" width="1" height="620" fill="#2d2d2d"/>
<rect x="225" y="0" width="1" height="620" fill="#2d2d2d"/>
<rect x="244" y="0" width="1" height="620" fill="#2d2d2d"/>
<rect x="264" y="0" width="1" height="620" fill="#292929"/>
<rect x="284" y="0" width="1" height="620" fill="#2d2d2d"/>
<rect x="303" y="0" width="1" height="620" fill="#2d2d2d"/>
<rect x="323" y="0" width="1" height="620" fill="#2d2d2d"/>
<rect x="342" y="0" width="1" height="620" fill="#2d2d2d"/>
<rect x="362" y="0" width="1" height="620" fill="#292929"/>
<rect x="382" y="0" width="1" height="620" fill="#2d2d2d"/>
<rect x="401" y="0" width="1" height="620" fill="#2d2d2d"/>
<rect x="421" y="0" width="1" height="620" fill="#2d2d2d"/>
<rect x="441" y="0" width="1" height="620" fill="#2d2d2d"/>
<rect x="460" y="0" width="1" height="620" fill="#292929"/>
<rect x="480" y="0" width="1" height="620" fill="#2d2d2d"/>
<rect x="500" y="0" width="1" height="620" fill="#2d2d2d"/>
<rect x="519" y="0" width="1" height="620" fill="#2d2d2d"/>
<rect x="539" y="0" width="1" height="620" fill="#2d2d2d"/>
<rect x="559" y="0" width="1" height="620" fill="#292929"/>
<rect x="578" y="0" width="1" height="620" fill="#2d2d2d"/>
<rect x="598" y="0" width="1" height="620" fill="#2d2d2d"/>
<rect x="617" y="0" width="1" height="620" fill="#2d2d2d"/>
<rect x="637" y="0" width="1" height="620" fill="#2d2d2d"/>
<rect x="657" y="0" width="1" height="620" fill="#292929"/>
<rect x="676" y="0" width="1" height="620" fill="#2d2d2d"/>
<rect x="696" y="0" width="1" height="620" fill="#2d2d2d"/>
<rect x="716" y="0" width="1" height="620" fill="#2d2d2d"/>
<rect x="735" y="0" width="1" height="620" fill="#2d2d2d"/>
<rect x="755" y="0" width="1" height="620" fill="#292929"/>
<rect x="775" y="0" width="1" height="620" fill="#2d2d2d"/>
<rect x="794" y="0" width="1" height="620" fill="#2d2d2d"/>
<rect x="814" y="0" width="1" height="620" fill="#2d2d2d"/>
<rect x="834" y="0" width="1" height="620" fill="#2d2d2d"/>
<rect x="853" y="0" width="1" height="620" fill="#292929"/>
<rect x="873" y="0" width="1" height="620" fill="#2d2d2d"/>
<rect x="892" y="0" width="1" height="620" fill="#2d2d2d"/>
<rect x="912" y="0" width="1" height="620" fill="#2d2d2d"/>
<rect x="932" y="0" width="1" height="620" fill="#2d2d2d"/>
<rect x="951" y="0" width="1" height="620" fill="#292929"/>
<rect x="971" y="0" width="1" height="620" fill="#2d2d2d"/>
<rect x="991" y="0" width="1" height="620" fill="#2d2d2d"/>
<rect x="1010" y="0" width="1" height="620" fill="#2d2d2d"/>
<rect x="0" y="5" width="1020" height="1" fill="#292929"/>
<rect x="0" y="25" width="1020" height="1" fill="#2d2d2d"/>
<rect x="0" y="45" width="1020" height="1" fill="#2d2d2d"/>
<rect x="0" y="64" width="1020" height="1" fill="#2d2d2d"/>
<rect x="0" y="84" width="1020" height="1" fill="#2d2d2d"/>
<rect x="0" y="103" width="1020" height="1" fill="#292929"/>
<rect x="0" y="123" width="1020" height="1" fill="#2d2d2d"/>
<rect x="0" y="143" width="1020" height="1" fill="#2d2d2d"/>
<rect x="0" y="162" width="1020" height="1" fill="#2d2d2d"/>
<rect x="0" y="182" width="1020" height="1" fill="#2d2d2d"/>
<rect x="0" y="202" width="1020" height="1" fill="#292929"/>
<rect x="0" y="221" width="1020" height="1" fill="#2d2d2d"/>
<rect x="0" y="241" width="1020" height="1" fill="#2d2d2d"/>
<rect x="0" y="261" width="1020" height="1" fill="#2d2d2d"/>
<rect x="0" y="280" width="1020" height="1" fill="#2d2d2d"/>
<rect x="0" y="300" width="1020" height="1" fill="#292929"/>
<rect x="0" y="319" width="1020" height="1" fill="#2d2d2d"/>
<rect x="0" y="339" width="1020" height="1" fill="#2d2d2d"/>
<rect x="0" y="359" width="1020" height="1" fill="#2d2d2d"/>
<rect x="0" y="378" width="1020" height="1" fill="#2d2d2d"/>
<rect x="0" y="398" width="1020" height="1" fill="#212121"/>
<rect x="0" y="418" width="1020" height="1" fill="#2d2d2d"/>
<rect x="0" y="437" width="1020" height="1" fill="#2d2d2d"/>
<rect x="0" y="457" width="1020" height="1" fill="#2d2d2d"/>
<rect x="0" y="477" width="1020" height="1" fill="#2d2d2d"/>
<rect x="0" y="496" width="1020" height="1" fill="#292929"/>
<rect x="0" y="516" width="1020" height="1" fill="#2d2d2d"/>
<rect x="0" y="535" width="1020" height="1" fill="#2d2d2d"/>
<rect x="0" y="555" width="1020" height="1" fill="#2d2d2d"/>
<rect x="0" y="575" width="1020" height="1" fill="#2d2d2d"/>
<rect x="0" y="594" width="1020" height="1" fill="#292929"/>
<rect x="0" y="614" width="1020" height="1" fill="#2d2d2d"/></g>
</svg></body></html>
